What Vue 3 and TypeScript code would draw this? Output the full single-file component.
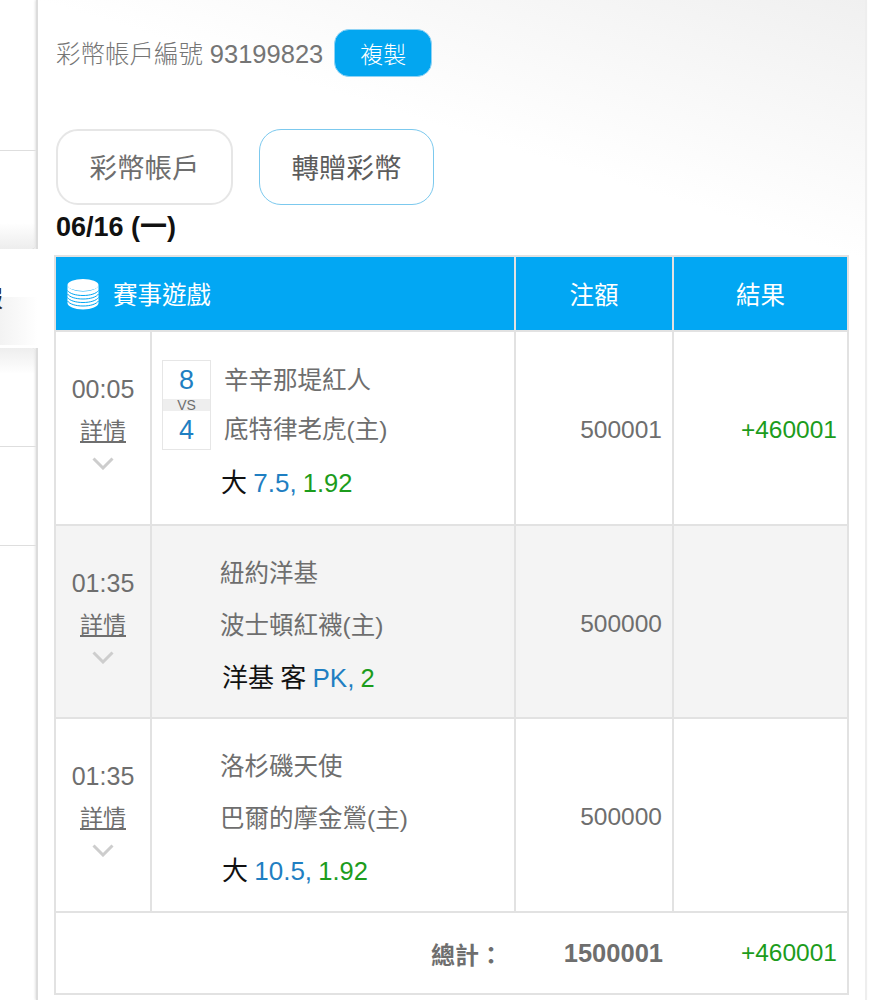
<script setup lang="ts">
interface Game {
  time: string
  home: string
  away: string
  scoreA?: number
  scoreB?: number
  pick: string
  line: string
  odds: string
  stake: string
  result?: string
}

const games: Game[] = [
  { time: '00:05', away: '辛辛那堤紅人', home: '底特律老虎(主)', scoreA: 8, scoreB: 4, pick: '大', line: '7.5,', odds: '1.92', stake: '500001', result: '+460001' },
  { time: '01:35', away: '紐約洋基', home: '波士頓紅襪(主)', pick: '洋基 客', line: 'PK,', odds: '2', stake: '500000' },
  { time: '01:35', away: '洛杉磯天使', home: '巴爾的摩金鶯(主)', pick: '大', line: '10.5,', odds: '1.92', stake: '500000' }
]
</script>

<template>
  <div class="page">
    <aside class="side">
      <div class="panel panel-top">
        <div class="side-row tall"></div>
        <div class="side-row last"></div>
      </div>
      <div class="side-active"><span>報</span></div>
      <div class="panel panel-bottom">
        <div class="side-row"></div>
        <div class="side-row"></div>
      </div>
    </aside>

    <main class="main">
      <div class="account">
        <span>彩幣帳戶編號 <span class="acct-no">93199823</span></span>
        <button class="copy" type="button">複製</button>
      </div>

      <div class="tabs">
        <button class="tab" type="button">彩幣帳戶</button>
        <button class="tab tab-on" type="button">轉贈彩幣</button>
      </div>

      <div class="date">06/16 (一)</div>

      <table class="grid">
        <colgroup>
          <col class="c1" />
          <col class="c2" />
          <col class="c3" />
          <col class="c4" />
        </colgroup>
        <thead>
          <tr>
            <th colspan="2" class="th-left">
              <span class="th-title">
                <svg class="coins" viewBox="0 0 32 32" width="32" height="32" aria-hidden="true">
                  <ellipse cx="16" cy="7" rx="15.5" ry="6" fill="#fff" />
                  <path d="M.5 7v18c0 3.5 7 6.500 15.500 6.500s15.500-3 15.500-6.500V7c0 3.500-7 6.500-15.500 6.500S.5 10.500.5 7z" fill="#fff" />
                  <g fill="none" stroke="#00a6f2" stroke-width="1">
                    <path d="M.5 12.500c2 3 8 5 15.500 5s13.500-2 15.500-5" />
                    <path d="M.5 16c2 3 8 5 15.500 5s13.500-2 15.500-5" />
                    <path d="M.5 19.500c2 3 8 5 15.500 5s13.500-2 15.500-5" />
                    <path d="M.5 23c2 3 8 5 15.500 5s13.500-2 15.500-5" />
                  </g>
                </svg>
                賽事遊戲
              </span>
            </th>
            <th>注額</th>
            <th>結果</th>
          </tr>
        </thead>
        <tbody>
          <tr v-for="(g, i) in games" :key="i" :class="{ shaded: i === 1 }">
            <td class="time-cell">
              <div class="time">{{ g.time }}</div>
              <a class="detail">詳情</a>
              <svg class="chev" viewBox="0 0 22 13" width="22" height="13" aria-hidden="true">
                <path d="M1.500 1.500 11 11l9.500-9.500" fill="none" stroke="#cdcdcd" stroke-width="3" />
              </svg>
            </td>
            <td class="match-cell">
              <div class="match" :class="{ plain: g.scoreA === undefined }">
                <div v-if="g.scoreA !== undefined" class="score">
                  <div class="num">{{ g.scoreA }}</div>
                  <div class="vs">VS</div>
                  <div class="num">{{ g.scoreB }}</div>
                </div>
                <div class="teams">
                  <div class="team">{{ g.away }}</div>
                  <div class="team">{{ g.home }}</div>
                  <div class="bet">{{ g.pick }} <span class="line">{{ g.line }}</span> <span class="odds">{{ g.odds }}</span></div>
                </div>
              </div>
            </td>
            <td class="num-cell">{{ g.stake }}</td>
            <td class="num-cell win">{{ g.result }}</td>
          </tr>
          <tr class="total">
            <td colspan="2" class="total-label">總計：</td>
            <td class="num-cell strong">1500001</td>
            <td class="num-cell win">+460001</td>
          </tr>
        </tbody>
      </table>
    </main>
  </div>
</template>

<style>
html, body { margin: 0; background: #fff; }
</style>

<style scoped>
.page {
  display: flex;
  width: 879px;
  height: 1000px;
  overflow: hidden;
  background: #fff;
  font-family: "Liberation Sans", "Noto Sans CJK TC", sans-serif;
  color: #6e6e6e;
}
.side {
  width: 36px;
  flex: none;
  display: flex;
  flex-direction: column;
}
.panel { background: #fff; }
.panel-top {
  height: 249px;
  border-bottom-right-radius: 6px;
  box-shadow: 0 1px 2px #cfcfcf;
  background: linear-gradient(to bottom, #fff 223px, #ededed 249px);
}
.panel-bottom {
  height: 199px;
  border-top-right-radius: 6px;
  box-shadow: 0 -1px 2px #dcdcdc;
  background: linear-gradient(to bottom, #eeeeee, #fff 26px);
}
.side-row {
  height: 98px;
  border-bottom: 1px solid #dedede;
}
.side-row.tall { height: 150px; }
.side-row.last { border-bottom: 0; height: 99px; }
.side-active {
  height: 99px;
  margin-right: -2px;
  position: relative;
  z-index: 1;
  display: flex;
  align-items: flex-start;
  padding-top: 36px;
  box-sizing: border-box;
  overflow: hidden;
  background: #fff linear-gradient(to right, #f3f3f3, #fff) no-repeat 0 48px / 100% 48px;
  font-size: 24px;
  line-height: 28px;
  color: #222;
}
.side-active span { margin-left: -21px; }
.main {
  width: 831px;
  height: 1000px;
  flex: none;
  box-sizing: border-box;
  padding: 29px 0 0 18px;
  border-left: 2px solid #dcdcdc;
  border-right: 2px solid #eeeeee;
  box-shadow: -1px 0 2px #e4e4e4;
  background: linear-gradient(to bottom left, #f0f0f0 0, #fff 50%) no-repeat top / 100% 260px;
}
.account {
  display: flex;
  align-items: center;
  gap: 11px;
  height: 48px;
  font-size: 24.500px;
  font-weight: 300;
  color: #757575;
}
.account > span { position: relative; top: -1px; }
.acct-no { font-size: 25.500px; }
.copy {
  width: 98px;
  height: 48px;
  border: 1px solid #8fd3f5;
  border-radius: 15px;
  background: #03a6f0;
  color: #fff;
  font: inherit;
  font-size: 23px;
  padding: 0;
}
.tabs {
  display: flex;
  gap: 26px;
  margin-top: 52px;
}
.tab {
  width: 177px;
  height: 76px;
  box-sizing: border-box;
  border: 2px solid #e6e6e6;
  border-radius: 22px;
  background: #fff;
  color: #6e6e6e;
  font: inherit;
  font-size: 27.500px;
  padding: 0 0 2px;
}
.tab-on {
  width: 175px;
  border: 1.500px solid #7cc9ee;
  color: #5c5c5c;
}
.date {
  height: 42px;
  margin-top: 1px;
  line-height: 42px;
  font-size: 27px;
  font-weight: 700;
  color: #111;
}
.grid {
  width: 793px;
  table-layout: fixed;
  border-collapse: collapse;
  margin: 7px 0 0 -2px;
}
.c1 { width: 96px; }
.c2 { width: 364px; }
.c3 { width: 158px; }
.c4 { width: 175px; }
th, td {
  border: 2px solid #e2e2e2;
  padding: 0;
}
th {
  height: 73px;
  background: #02a7f3;
  color: #fff;
  font-size: 24.500px;
  font-weight: 400;
}
.th-left { text-align: left; }
.th-title {
  display: flex;
  align-items: center;
  gap: 14px;
  padding-left: 11px;
}
.coins { flex: none; }
tbody tr { height: 193.500px; }
.shaded td { background: #f4f4f4; }
.time-cell {
  text-align: center;
  vertical-align: top;
  padding-top: 39px;
}
.time {
  font-size: 25px;
  line-height: 36px;
  font-weight: 300;
}
.detail {
  display: block;
  margin-top: 8px;
  font-size: 23px;
  line-height: 32px;
  text-decoration: underline;
}
.chev {
  display: block;
  margin: 10px auto 0;
}
.match-cell { vertical-align: top; }
.match {
  display: flex;
  padding: 28px 0 0 10px;
  gap: 13px;
}
.match.plain { padding-left: 68px; }
.score {
  width: 49px;
  height: 90px;
  flex: none;
  box-sizing: border-box;
  border: 1px solid #e6e6e6;
  text-align: center;
  color: #1f7fc2;
  background: #fff;
}
.num {
  height: 38px;
  line-height: 38px;
  font-size: 27px;
}
.vs {
  height: 12px;
  line-height: 12px;
  font-size: 14px;
  color: #6e6e6e;
  background: #eeeeee;
}
.team {
  height: 49px;
  line-height: 40px;
  font-size: 24.500px;
  position: relative;
  top: 1px;
}
.plain .team { height: 52px; top: 0; }
.bet {
  margin: 5px 0 0 -3px;
  line-height: 40px;
  font-size: 26px;
  color: #111;
  word-spacing: -1px;
}
.plain .bet { margin: 0 0 0 2px; }
.line { color: #1f7fc2; }
.odds { color: #1c9c1c; font-size: 25.500px; }
.num-cell {
  text-align: right;
  padding: 5px 10px 0 0;
  font-size: 24.500px;
}
.win { color: #1c9c1c; }
.total { height: 81px; }
.total td { height: 79px; padding-top: 1px; border-left: 0; border-right: 0; }
.total td:first-child { border-left: 2px solid #e2e2e2; }
.total td:last-child { border-right: 2px solid #e2e2e2; }
.total-label {
  text-align: right;
  padding-right: 12px;
  font-size: 24px;
  font-weight: 700;
}
.strong { font-weight: 700; font-size: 25.500px; }
</style>
